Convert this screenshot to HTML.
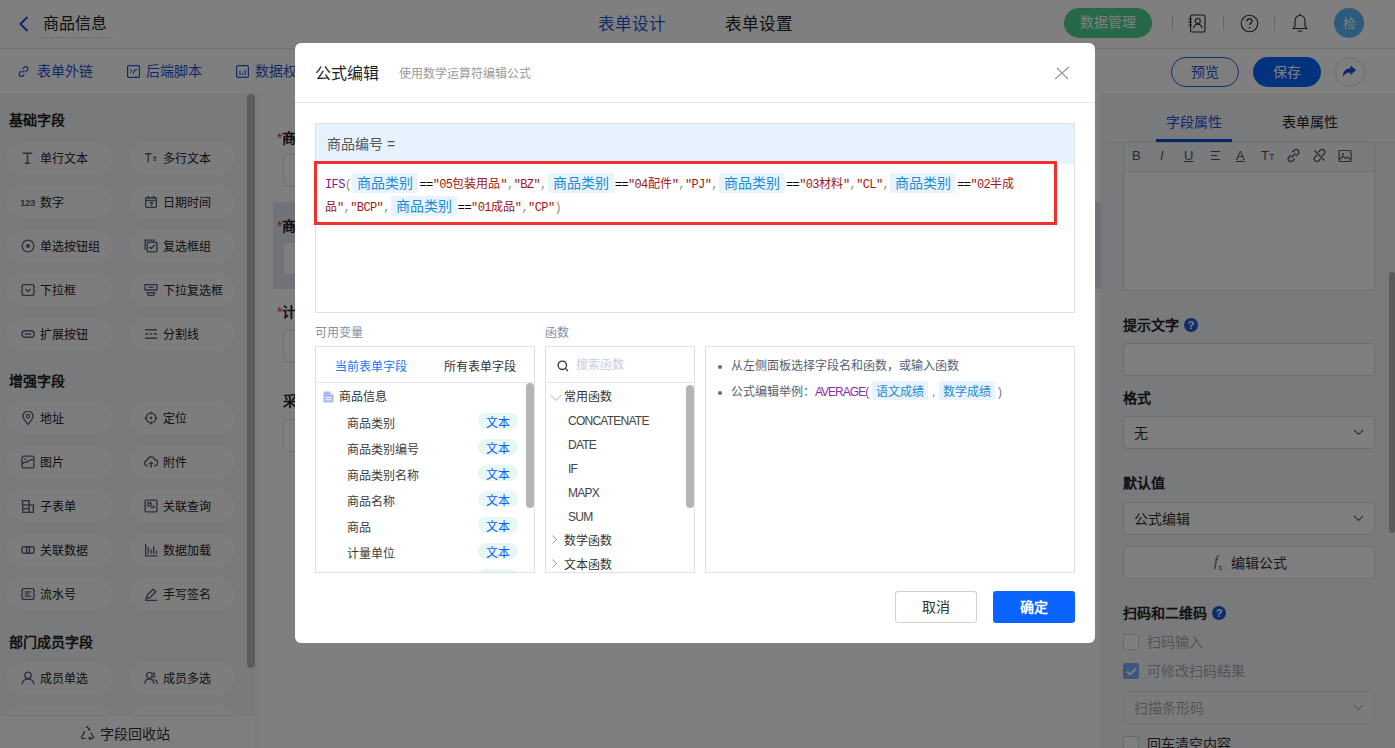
<!DOCTYPE html>
<html lang="zh-CN"><head><meta charset="utf-8">
<style>
*{box-sizing:border-box;margin:0;padding:0}
html,body{width:1395px;height:748px;overflow:hidden;font-family:"Liberation Sans",sans-serif;color:#333;background:#fff}
.a{position:absolute}
.t{position:absolute;white-space:nowrap;line-height:1}
#hdr{left:0;top:0;width:1395px;height:49px;background:#fff;border-bottom:1px solid #e6e6e6}
#tb{left:0;top:49px;width:1395px;height:44px;background:#fff}
#lp{left:0;top:93px;width:262px;height:655px;background:#f3f4f7;overflow:hidden}
#cv{left:262px;top:93px;width:839px;height:655px;background:#fff}
#rp{left:1101px;top:93px;width:294px;height:655px;background:#f3f4f7;overflow:hidden}
.pill{position:absolute;height:34px;border-radius:17px;background:#fbfbfc;width:105px}
.pill span{position:absolute;left:33px;top:11px;font-size:12px;line-height:14px;color:#222}
.pill svg{position:absolute;left:14px;top:10px}
.sec{position:absolute;left:9px;font-size:14px;font-weight:bold;color:#1f1f1f;line-height:14px;white-space:nowrap}
#mask{left:0;top:0;width:1395px;height:748px;background:rgba(0,0,0,.5)}
#modal{left:295px;top:43px;width:800px;height:600px;background:#fff;border-radius:6px;overflow:hidden}
.lab{position:absolute;font-size:14px;font-weight:bold;color:#222;line-height:14px;white-space:nowrap}
.lab i{color:#e0282e;font-style:normal;font-weight:normal}
.inp{position:absolute;height:33px;border:1px solid #dcdfe6;border-radius:4px;background:#fff}
.rl{position:absolute;left:22px;font-size:14px;font-weight:bold;color:#222;line-height:14px;white-space:nowrap}
.rin{position:absolute;left:22px;width:252px;height:33px;border:1px solid #dcdfe6;border-radius:4px;background:#fff}
.rin span{position:absolute;left:10px;top:9px;font-size:14px;line-height:14px;color:#333}
.chev{position:absolute;right:10px;top:12px}
.qm{display:inline-block;width:14px;height:14px;border-radius:7px;background:#1e5bd8;color:#fff;font-size:11px;line-height:14px;text-align:center;font-weight:bold;vertical-align:top;margin-left:5px}
.cb{position:absolute;left:22px;width:16px;height:16px;border:1px solid #d0d0d0;border-radius:2px;background:#fff}
.cbt{position:absolute;left:46px;font-size:14px;line-height:14px;color:#aaa;white-space:nowrap}
</style><style>
#code .kw{color:#7d1b93}
#code .pu{color:#8f8f70}
#code .st{color:#a31515}
#code b{font-family:"Liberation Sans",sans-serif;font-weight:normal;font-size:12px;letter-spacing:0}
#code .tg{display:inline-block;font-family:"Liberation Sans",sans-serif;font-size:14px;line-height:20px;height:20px;padding:0 5px;background:#e8f3fd;color:#1a8bd6;margin:0 1px 0 1px;border-radius:2px;vertical-align:top;margin-top:0;letter-spacing:0}
.vi{position:absolute;left:0;width:218px;height:20px}
.vi span{position:absolute;left:31px;top:4px;font-size:12px;line-height:14px;color:#3c3c3c;white-space:nowrap}
.vi i{position:absolute;left:162px;top:0;width:40px;height:16px;border-radius:8px;background:#e7f7f6;color:#0f5ef7;font-style:normal;font-size:12px;line-height:21px;text-align:center}
.fn{left:22px;font-size:12px;color:#444;letter-spacing:-0.75px}
.tg2{background:#e8f3fd;color:#1a8bd6;height:19px;line-height:22px;border-radius:2px;font-size:12px;text-align:center;white-space:nowrap}
</style>
</head><body>

<!-- header -->
<div id="hdr" class="a">
  <svg class="a" style="left:18px;top:16px" width="11" height="16" viewBox="0 0 11 16"><path d="M9.5 1L2.5 8L9.5 15" fill="none" stroke="#1c4fd0" stroke-width="2"/></svg>
  <div class="t" style="left:43px;top:16px;font-size:16px;color:#222">商品信息</div>
  <div class="a" style="left:41px;top:37px;width:72px;border-top:1px dashed #c8c8c8"></div>
  <div class="t" style="left:598px;top:16px;font-size:16.5px;color:#1f55d6">表单设计</div>
  <div class="t" style="left:725px;top:16px;font-size:16.5px;color:#222">表单设置</div>
  <div class="a" style="left:1064px;top:8px;width:88px;height:30px;border-radius:15px;background:#4dd190"></div>
  <div class="t" style="left:1080px;top:15px;font-size:14px;color:#fff">数据管理</div>
  <div class="a" style="left:1172px;top:16px;width:1px;height:14px;background:#ccc"></div>
  <div class="a" style="left:1223px;top:16px;width:1px;height:14px;background:#ccc"></div>
  <div class="a" style="left:1274px;top:16px;width:1px;height:14px;background:#ccc"></div>
  <svg class="a" style="left:1188px;top:14px" width="19" height="19" viewBox="0 0 19 19"><rect x="2.5" y="1" width="14.5" height="17" rx="1.5" fill="none" stroke="#2a2a2a" stroke-width="1.1"/><circle cx="9.8" cy="7" r="2.5" fill="none" stroke="#2a2a2a" stroke-width="1.1"/><path d="M5.5 14.5c.5-3 2.3-4.2 4.3-4.2s3.8 1.2 4.3 4.2M0.5 5h3.5M0.5 8h3.5M0.5 11h3.5" fill="none" stroke="#2a2a2a" stroke-width="1.1"/></svg>
  <svg class="a" style="left:1240px;top:14px" width="19" height="19" viewBox="0 0 19 19"><circle cx="9.5" cy="9.5" r="8.3" fill="none" stroke="#2a2a2a" stroke-width="1.1"/><path d="M7 7.3a2.5 2.5 0 115 .2c0 1.6-2.5 1.8-2.5 3.6" fill="none" stroke="#2a2a2a" stroke-width="1.2"/><circle cx="9.5" cy="13.6" r="0.9" fill="#2a2a2a"/></svg>
  <svg class="a" style="left:1291px;top:13px" width="18" height="20" viewBox="0 0 18 20"><path d="M9 2.5c-3.2 0-5 2.5-5 5.5v5L2 15.5h14L14 13V8c0-3-1.8-5.5-5-5.5z" fill="none" stroke="#2a2a2a" stroke-width="1.1" stroke-linejoin="round"/><path d="M9 1v1.5M7 18h4" stroke="#2a2a2a" stroke-width="1.2" stroke-linecap="round"/></svg>
  <div class="a" style="left:1334px;top:8px;width:30px;height:30px;border-radius:15px;background:#58b7fb"></div>
  <div class="t" style="left:1343px;top:17px;font-size:13px;color:#fff">检</div>
</div>
<!-- toolbar -->
<div id="tb" class="a">
  <svg class="a" style="left:17px;top:16px" width="13" height="13" viewBox="0 0 13 13"><path d="M5.5 7.5l2-2M4.3 6L2.5 7.8a2.3 2.3 0 003.2 3.2l1.8-1.8M8.7 7l1.8-1.8A2.3 2.3 0 007.3 2L5.5 3.8" fill="none" stroke="#2457d6" stroke-width="1.2"/></svg>
  <div class="t" style="left:37px;top:15px;font-size:14px;color:#1f55d6">表单外链</div>
  <svg class="a" style="left:127px;top:16px" width="13" height="13" viewBox="0 0 13 13"><rect x="0.6" y="0.6" width="11.8" height="11.8" rx="1" fill="none" stroke="#2457d6" stroke-width="1.2"/><path d="M3 8l2-2-2-2M6 9l2-5M10 4l-2 2" fill="none" stroke="#2457d6" stroke-width="1"/></svg>
  <div class="t" style="left:146px;top:15px;font-size:14px;color:#1f55d6">后端脚本</div>
  <svg class="a" style="left:236px;top:16px" width="13" height="13" viewBox="0 0 13 13"><rect x="0.6" y="0.6" width="11.8" height="11.8" rx="1.5" fill="none" stroke="#2457d6" stroke-width="1.2"/><path d="M4 6v4M6.5 8v2M9 5v5" fill="none" stroke="#2457d6" stroke-width="1.2"/></svg>
  <div class="t" style="left:255px;top:15px;font-size:14px;color:#1f55d6">数据权限</div>
  <div class="a" style="left:1171px;top:8px;width:68px;height:30px;border-radius:15px;border:1px solid #1c5ef0"></div>
  <div class="t" style="left:1191px;top:16px;font-size:14px;color:#1f55d6">预览</div>
  <div class="a" style="left:1253px;top:8px;width:68px;height:30px;border-radius:15px;background:#0a64ff"></div>
  <div class="t" style="left:1273px;top:16px;font-size:14px;color:#fff">保存</div>
  <div class="a" style="left:1335px;top:8px;width:30px;height:30px;border-radius:15px;border:1px solid #d8dbe3;background:#fff"></div>
  <svg class="a" style="left:1342px;top:16px" width="15" height="13" viewBox="0 0 15 13"><path d="M14 5L8.5 0.5v2.8C4 3.5 1 6 0.8 12c1.5-3.2 4-4.5 7.7-4.5v2.8z" fill="#1c4fd0"/></svg>
</div>
<!-- left panel -->
<div id="lp" class="a">
  <div class="sec" style="top:20px">基础字段</div>
  <div class="sec" style="top:281px">增强字段</div>
  <div class="sec" style="top:542px">部门成员字段</div>

<div class="pill" style="left:7px;top:48px"><svg width="14" height="15" viewBox="0 0 13 14"><path d="M1.5 2h9M6 2v9.5M3.5 11.5h5" stroke="#56627a" stroke-width="1.4" fill="none"/></svg><span>单行文本</span></div>
<div class="pill" style="left:130px;top:48px"><svg width="14" height="15" viewBox="0 0 13 14"><path d="M1 2.5h6M4 2.5v8M8.5 6h3M8.5 8.5h3" stroke="#56627a" stroke-width="1.3" fill="none"/></svg><span>多行文本</span></div>
<div class="pill" style="left:7px;top:92px"><svg width="14" height="15" viewBox="0 0 13 14"><text x="-1" y="10" font-size="9" font-weight="bold" fill="#56627a" font-family="Liberation Sans" letter-spacing="-0.3">123</text></svg><span>数字</span></div>
<div class="pill" style="left:130px;top:92px"><svg width="14" height="15" viewBox="0 0 13 14"><rect x="1.5" y="2.5" width="10" height="9" rx="1" stroke="#56627a" stroke-width="1.3" fill="none"/><path d="M1.5 5h10M4 1v2.5M9 1v2.5M5 7h3l-1.5 3" stroke="#56627a" stroke-width="1.2" fill="none"/></svg><span>日期时间</span></div>
<div class="pill" style="left:7px;top:136px"><svg width="14" height="15" viewBox="0 0 13 14"><circle cx="6.5" cy="6.5" r="5.5" stroke="#56627a" stroke-width="1.3" fill="none"/><circle cx="6.5" cy="6.5" r="1.8" fill="#56627a"/></svg><span>单选按钮组</span></div>
<div class="pill" style="left:130px;top:136px"><svg width="14" height="15" viewBox="0 0 13 14"><path d="M1 10V1h9" stroke="#56627a" stroke-width="1.3" fill="none"/><rect x="3" y="3" width="9" height="9" rx="1" stroke="#56627a" stroke-width="1.3" fill="none"/><path d="M5 7.3l1.6 1.6L10 5.6" stroke="#56627a" stroke-width="1.3" fill="none"/></svg><span>复选框组</span></div>
<div class="pill" style="left:7px;top:180px"><svg width="14" height="15" viewBox="0 0 13 14"><rect x="1" y="1.5" width="11" height="10" rx="1" stroke="#56627a" stroke-width="1.3" fill="none"/><path d="M4 5.5l2.5 2.5L9 5.5" stroke="#56627a" stroke-width="1.3" fill="none"/></svg><span>下拉框</span></div>
<div class="pill" style="left:130px;top:180px"><svg width="14" height="15" viewBox="0 0 13 14"><path d="M1 1.5h11v5H1z M3 9h7l-1 2.5H4z" stroke="#56627a" stroke-width="1.3" fill="none"/><path d="M4 4h5" stroke="#56627a" stroke-width="1.3"/></svg><span>下拉复选框</span></div>
<div class="pill" style="left:7px;top:224px"><svg width="14" height="15" viewBox="0 0 13 14"><rect x="0.8" y="3.5" width="11.5" height="6" rx="3" stroke="#56627a" stroke-width="1.3" fill="none"/><path d="M3.5 6.5h6" stroke="#56627a" stroke-width="1.3"/></svg><span>扩展按钮</span></div>
<div class="pill" style="left:130px;top:224px"><svg width="14" height="15" viewBox="0 0 13 14"><path d="M1 2.5h11M1 6.5h3M5.5 6.5h2M9 6.5h3M1 10.5h11" stroke="#56627a" stroke-width="1.3" fill="none"/></svg><span>分割线</span></div>
<div class="pill" style="left:7px;top:308px"><svg width="14" height="15" viewBox="0 0 13 14"><path d="M6.5 12.5C3 8.5 1.8 6.5 1.8 4.8a4.7 4.7 0 019.4 0c0 1.7-1.2 3.7-4.7 7.7z" stroke="#56627a" stroke-width="1.3" fill="none"/><circle cx="6.5" cy="4.8" r="1.6" stroke="#56627a" stroke-width="1.2" fill="none"/></svg><span>地址</span></div>
<div class="pill" style="left:130px;top:308px"><svg width="14" height="15" viewBox="0 0 13 14"><circle cx="6.5" cy="6.5" r="4.5" stroke="#56627a" stroke-width="1.3" fill="none"/><circle cx="6.5" cy="6.5" r="1.3" fill="#56627a"/><path d="M6.5 0.5v2.5M6.5 10v2.5M0.5 6.5h2.5M10 6.5h2.5" stroke="#56627a" stroke-width="1.3"/></svg><span>定位</span></div>
<div class="pill" style="left:7px;top:352px"><svg width="14" height="15" viewBox="0 0 13 14"><rect x="1" y="1" width="11" height="11" rx="1.5" stroke="#56627a" stroke-width="1.3" fill="none"/><path d="M1 8.5c2-3 4-1 5.5-2.5S9.5 4 12 4.5" stroke="#56627a" stroke-width="1.3" fill="none"/><circle cx="4" cy="4" r="0.9" fill="#56627a"/></svg><span>图片</span></div>
<div class="pill" style="left:130px;top:352px"><svg width="14" height="15" viewBox="0 0 13 14"><path d="M3.5 10H3a2.5 2.5 0 010-5 3.5 3.5 0 016.8-.8A2.5 2.5 0 0110 10h-.5" stroke="#56627a" stroke-width="1.3" fill="none"/><path d="M6.5 12V7M4.8 8.5l1.7-1.7 1.7 1.7" stroke="#56627a" stroke-width="1.3" fill="none"/></svg><span>附件</span></div>
<div class="pill" style="left:7px;top:396px"><svg width="14" height="15" viewBox="0 0 13 14"><path d="M1.5 1.5h6v11h-6zM7.5 5.5h4v7h-4M1.5 5.5h6M1.5 9h6" stroke="#56627a" stroke-width="1.3" fill="none"/></svg><span>子表单</span></div>
<div class="pill" style="left:130px;top:396px"><svg width="14" height="15" viewBox="0 0 13 14"><rect x="1" y="1" width="11" height="11" rx="1" stroke="#56627a" stroke-width="1.3" fill="none"/><path d="M3.5 3.5h3v3h-3zM6 8h3M8 6l2 2" stroke="#56627a" stroke-width="1.2" fill="none"/></svg><span>关联查询</span></div>
<div class="pill" style="left:7px;top:440px"><svg width="14" height="15" viewBox="0 0 13 14"><rect x="0.8" y="3.5" width="7" height="6" rx="1.5" stroke="#56627a" stroke-width="1.3" fill="none"/><rect x="5.2" y="3.5" width="7" height="6" rx="1.5" stroke="#56627a" stroke-width="1.3" fill="none"/></svg><span>关联数据</span></div>
<div class="pill" style="left:130px;top:440px"><svg width="14" height="15" viewBox="0 0 13 14"><path d="M1.5 1v11h11M4 4v6M6.5 6v4M9 3v7M11.5 7v3" stroke="#56627a" stroke-width="1.3" fill="none"/></svg><span>数据加载</span></div>
<div class="pill" style="left:7px;top:484px"><svg width="14" height="15" viewBox="0 0 13 14"><rect x="1" y="1.5" width="11" height="10" rx="1" stroke="#56627a" stroke-width="1.3" fill="none"/><path d="M3.5 4.5h6M3.5 6.5h4M3.5 8.5h6" stroke="#56627a" stroke-width="1.2"/></svg><span>流水号</span></div>
<div class="pill" style="left:130px;top:484px"><svg width="14" height="15" viewBox="0 0 13 14"><path d="M2 11l1-3.5L8.5 2l2.5 2.5L5.5 10z M1 12.5h11" stroke="#56627a" stroke-width="1.3" fill="none"/></svg><span>手写签名</span></div>
<div class="pill" style="left:7px;top:568px"><svg width="14" height="15" viewBox="0 0 13 14"><circle cx="6.5" cy="4" r="3" stroke="#56627a" stroke-width="1.3" fill="none"/><path d="M1 12.5c0-3 2.5-5 5.5-5s5.5 2 5.5 5" stroke="#56627a" stroke-width="1.3" fill="none"/></svg><span>成员单选</span></div>
<div class="pill" style="left:130px;top:568px"><svg width="14" height="15" viewBox="0 0 13 14"><circle cx="5" cy="4" r="2.7" stroke="#56627a" stroke-width="1.3" fill="none"/><path d="M0.8 12c0-2.8 1.8-4.6 4.2-4.6s4.2 1.8 4.2 4.6M8.3 1.5a2.7 2.7 0 010 5M10 8c1.5.6 2.5 2 2.5 4" stroke="#56627a" stroke-width="1.3" fill="none"/></svg><span>成员多选</span></div>
<div class="pill" style="left:7px;top:612px"><svg width="14" height="15" viewBox="0 0 13 14"><circle cx="6.5" cy="4" r="3" stroke="#56627a" stroke-width="1.3" fill="none"/><path d="M1 12.5c0-3 2.5-5 5.5-5s5.5 2 5.5 5" stroke="#56627a" stroke-width="1.3" fill="none"/></svg><span>部门单选</span></div>
<div class="pill" style="left:130px;top:612px"><svg width="14" height="15" viewBox="0 0 13 14"><circle cx="5" cy="4" r="2.7" stroke="#56627a" stroke-width="1.3" fill="none"/><path d="M0.8 12c0-2.8 1.8-4.6 4.2-4.6s4.2 1.8 4.2 4.6M8.3 1.5a2.7 2.7 0 010 5M10 8c1.5.6 2.5 2 2.5 4" stroke="#56627a" stroke-width="1.3" fill="none"/></svg><span>部门多选</span></div>
  <div class="a" style="left:247px;top:1px;width:8px;height:574px;border-radius:4px;background:#b9b9b9"></div>
  <div class="a" style="left:255px;top:0;width:7px;height:655px;background:#f7f8fa"></div>
  <div class="a" style="left:0;top:622px;width:255px;height:33px;background:#fcfcfd;border-top:1px solid #eee"></div>
  <svg class="a" style="left:80px;top:633px" width="15" height="14" viewBox="0 0 15 14"><path d="M6 1.5L7.5 0.8 9.5 4.2M10.8 6.5l2.8 4.7-.8 1.3H9M5.5 12.5H2.2l-.7-1.3L4 6.8M8.2 3.3l1.3.9.4-1.5M3 6.5l1.1.4.4-1.5M10.5 11l-1.5 1.5 1.5 1" fill="none" stroke="#444" stroke-width="1.1"/></svg>
  <div class="t" style="left:100px;top:634px;font-size:14px;color:#333">字段回收站</div>
</div>
<!-- canvas -->
<div id="cv" class="a">
  <div class="a" style="left:11px;top:109px;width:830px;height:87px;background:#e2e7f2"></div>
  <div class="lab" style="left:15px;top:38px"><i>*</i>商品编号</div>
  <div class="inp" style="left:21px;top:61px;width:800px"></div>
  <div class="lab" style="left:15px;top:126px"><i>*</i>商品名称</div>
  <div class="inp" style="left:21px;top:149px;width:800px"></div>
  <div class="lab" style="left:15px;top:212px"><i>*</i>计量单位</div>
  <div class="inp" style="left:21px;top:237px;width:800px"></div>
  <div class="lab" style="left:21px;top:301px">采购单价</div>
  <div class="inp" style="left:21px;top:326px;width:800px"></div>
</div>

<!-- right panel -->
<div id="rp" class="a">
  <div class="a" style="left:0;top:0;width:1px;height:655px;background:#ececec"></div>
  <div class="t" style="left:65px;top:22px;font-size:14px;color:#1f55d6">字段属性</div>
  <div class="t" style="left:181px;top:22px;font-size:14px;color:#222">表单属性</div>
  <div class="a" style="left:8px;top:49px;width:286px;height:1px;background:#e3e3e3"></div>
  <div class="a" style="left:55px;top:46px;width:76px;height:3px;background:#0a50d8"></div>
  <div class="a" style="left:22px;top:50px;width:252px;height:148px;border:1px solid #dcdcdc;border-top:none;background:#fff"></div>
  <div class="a" style="left:23px;top:50px;width:250px;height:29px;background:#f5f6f8;border-bottom:1px solid #dedede"></div>
  <div class="t" style="left:31px;top:56px;font-size:13px;color:#555;font-weight:normal">B</div>
  <div class="t" style="left:59px;top:56px;font-size:13px;color:#555;font-style:italic">I</div>
  <div class="t" style="left:83px;top:56px;font-size:13px;color:#555;text-decoration:underline">U</div>
  <svg class="a" style="left:109px;top:57px" width="11" height="11" viewBox="0 0 11 11"><path d="M1 1.5h9M1 5.5h6M1 9.5h9" stroke="#555" stroke-width="1.2"/></svg>
  <div class="t" style="left:135px;top:56px;font-size:13px;color:#555;text-decoration:underline">A</div>
  <div class="t" style="left:160px;top:56px;font-size:13px;color:#555">T<span style="font-size:9px">T</span></div>
  <svg class="a" style="left:185px;top:55px" width="15" height="15" viewBox="0 0 15 15"><path d="M5.5 9.5l4-4M5 7L3 9a2.6 2.6 0 003.7 3.7l2-2M10 8l2-2A2.6 2.6 0 008.3 2.3l-2 2" fill="none" stroke="#555" stroke-width="1.3"/></svg>
  <svg class="a" style="left:211px;top:55px" width="15" height="15" viewBox="0 0 15 15"><path d="M5 7L3 9a2.6 2.6 0 003.7 3.7l2-2M10 8l2-2A2.6 2.6 0 008.3 2.3l-2 2M2.5 2.5l10 10" fill="none" stroke="#555" stroke-width="1.3"/></svg>
  <svg class="a" style="left:237px;top:56px" width="14" height="14" viewBox="0 0 14 14"><rect x="1" y="1.5" width="12" height="11" rx="1" fill="none" stroke="#555" stroke-width="1.2"/><path d="M1.5 10.5l3.5-3.5 2.5 2.5 2-1.5 3 2.5" fill="none" stroke="#555" stroke-width="1.1"/><circle cx="5" cy="5" r="1" fill="#555"/></svg>
  <div class="rl" style="top:225px">提示文字<span class="qm">?</span></div>
  <div class="rin" style="top:250px"></div>
  <div class="rl" style="top:298px">格式</div>
  <div class="rin" style="top:323px"><span>无</span><svg class="chev" width="11" height="7" viewBox="0 0 11 7"><path d="M1 1l4.5 4.5L10 1" fill="none" stroke="#666" stroke-width="1.2"/></svg></div>
  <div class="rl" style="top:383px">默认值</div>
  <div class="rin" style="top:409px"><span>公式编辑</span><svg class="chev" width="11" height="7" viewBox="0 0 11 7"><path d="M1 1l4.5 4.5L10 1" fill="none" stroke="#666" stroke-width="1.2"/></svg></div>
  <div class="rin" style="top:453px"><span style="left:90px;font-family:'Liberation Serif',serif;font-style:italic;color:#555;top:8px">f<sub style="font-size:9px;font-style:normal">x</sub></span><span style="left:107px">编辑公式</span></div>
  <div class="rl" style="top:513px">扫码和二维码<span class="qm">?</span></div>
  <div class="cb" style="top:541px"></div>
  <div class="cbt" style="top:542px">扫码输入</div>
  <div class="cb" style="top:570px;background:#7eacf8;border-color:#7eacf8"><svg class="a" style="left:2px;top:3px" width="11" height="9" viewBox="0 0 11 9"><path d="M1 4.5l3 3L10 1.5" fill="none" stroke="#fff" stroke-width="1.8"/></svg></div>
  <div class="cbt" style="top:571px">可修改扫码结果</div>
  <div class="rin" style="top:598px;background:#f7f7f8;border-color:#e4e4e4"><span style="color:#aaa">扫描条形码</span><svg class="chev" width="11" height="7" viewBox="0 0 11 7"><path d="M1 1l4.5 4.5L10 1" fill="none" stroke="#bbb" stroke-width="1.2"/></svg></div>
  <div class="cb" style="top:643px"></div>
  <div class="cbt" style="top:644px;color:#333">回车清空内容</div>
  <div class="a" style="left:288px;top:179px;width:6px;height:261px;border-radius:3px;background:#b5b5b5"></div>
</div>
<div id="mask" class="a"></div>

<div id="modal" class="a">
  <div class="t" style="left:20px;top:23px;font-size:16px;color:#1f1f1f">公式编辑</div>
  <div class="t" style="left:104px;top:25px;font-size:12px;color:#999">使用数学运算符编辑公式</div>
  <svg class="a" style="left:759px;top:22px" width="16" height="16" viewBox="0 0 16 16"><path d="M1 14L15 2M3 3l11 11" stroke="#999" stroke-width="1.2" fill="none"/></svg>
  <div class="a" style="left:0;top:59px;width:800px;height:1px;background:#e8e8e8"></div>
  <!-- formula box -->
  <div class="a" style="left:20px;top:80px;width:760px;height:190px;border:1px solid #e1e1e1"></div>
  <div class="a" style="left:21px;top:81px;width:758px;height:40px;background:#e6f3fe"></div>
  <div class="t" style="left:32px;top:94px;font-size:14px;color:#555">商品编号 =</div>
  <div id="code" class="a" style="left:30px;top:130px;width:720px;font-family:'Liberation Mono',monospace;font-size:12px;letter-spacing:-0.6px;line-height:22px;color:#000;white-space:nowrap">
    <div><span class="kw">IFS</span><span class="pu">(</span><span class="tg">商品类别</span>==<span class="st">"05<b>包装用品</b>"</span><span class="pu">,</span><span class="st">"BZ"</span><span class="pu">,</span><span class="tg">商品类别</span>==<span class="st">"04<b>配件</b>"</span><span class="pu">,</span><span class="st">"PJ"</span><span class="pu">,</span><span class="tg">商品类别</span>==<span class="st">"03<b>材料</b>"</span><span class="pu">,</span><span class="st">"CL"</span><span class="pu">,</span><span class="tg">商品类别</span>==<span class="st">"02<b>半成</b></span></div>
    <div><span class="st"><b>品</b>"</span><span class="pu">,</span><span class="st">"BCP"</span><span class="pu">,</span><span class="tg">商品类别</span>==<span class="st">"01<b>成品</b>"</span><span class="pu">,</span><span class="st">"CP"</span><span class="pu">)</span></div>
  </div>
  <div class="a" style="left:19px;top:118px;width:743px;height:64px;border:3px solid #f0302d"></div>
  <!-- labels -->
  <div class="t" style="left:20px;top:284px;font-size:12px;color:#7f90a8">可用变量</div>
  <div class="t" style="left:250px;top:284px;font-size:12px;color:#7f90a8">函数</div>
  <!-- var panel -->
  <div class="a" style="left:20px;top:303px;width:220px;height:227px;border:1px solid #e1e1e1;overflow:hidden">
    <div class="a" style="left:0;top:35px;width:218px;height:1px;background:#e6e6e6"></div>
    <div class="t" style="left:19px;top:14px;font-size:12px;color:#1677ff">当前表单字段</div>
    <div class="t" style="left:128px;top:14px;font-size:12px;color:#333">所有表单字段</div>
    <svg class="a" style="left:7px;top:44px" width="11" height="12" viewBox="0 0 11 12"><path d="M0.5 0.5h6.5l3.5 3.5v7.5h-10z" fill="#a8b8f8"/><path d="M2.5 6.5h6M2.5 8.8h6" stroke="#fff" stroke-width="1.1"/><path d="M7 0.5v3.5h3.5" fill="#d6defd"/></svg>
    <div class="t" style="left:23px;top:44px;font-size:12px;color:#333">商品信息</div>
    <div class="vi" style="top:66px"><span>商品类别</span><i>文本</i></div>
    <div class="vi" style="top:92px"><span>商品类别编号</span><i>文本</i></div>
    <div class="vi" style="top:118px"><span>商品类别名称</span><i>文本</i></div>
    <div class="vi" style="top:144px"><span>商品名称</span><i>文本</i></div>
    <div class="vi" style="top:170px"><span>商品</span><i>文本</i></div>
    <div class="vi" style="top:196px"><span>计量单位</span><i>文本</i></div>
    <div class="vi" style="top:222px"><span>采购单价</span><i>文本</i></div>
    <div class="a" style="left:210px;top:36px;width:8px;height:125px;border-radius:4px;background:#b5b5b5"></div>
  </div>
  <!-- func panel -->
  <div class="a" style="left:250px;top:303px;width:150px;height:227px;border:1px solid #e1e1e1;overflow:hidden">
    <div class="a" style="left:0;top:35px;width:148px;height:1px;background:#e6e6e6"></div>
    <svg class="a" style="left:11px;top:13px" width="12" height="12" viewBox="0 0 12 12"><circle cx="5.3" cy="5.3" r="4.2" fill="none" stroke="#333" stroke-width="1.3"/><path d="M8.4 8.4l2.6 2.6" stroke="#333" stroke-width="1.3"/></svg>
    <div class="t" style="left:30px;top:12px;font-size:12px;color:#c6cedb">搜索函数</div>
    <svg class="a" style="left:4px;top:47px" width="12" height="7" viewBox="0 0 12 7"><path d="M0.5 0.8l5.5 5.5 5.5-5.5" fill="none" stroke="#c2c9d6" stroke-width="1.1"/></svg>
    <div class="t" style="left:18px;top:44px;font-size:12px;color:#333">常用函数</div>
    <div class="t fn" style="top:68px">CONCATENATE</div>
    <div class="t fn" style="top:92px">DATE</div>
    <div class="t fn" style="top:116px">IF</div>
    <div class="t fn" style="top:140px">MAPX</div>
    <div class="t fn" style="top:164px">SUM</div>
    <svg class="a" style="left:6px;top:188px" width="5" height="9" viewBox="0 0 5 9"><path d="M0.5 0.5l4 4-4 4" fill="none" stroke="#999" stroke-width="1"/></svg>
    <div class="t" style="left:18px;top:188px;font-size:12px;color:#333">数学函数</div>
    <svg class="a" style="left:6px;top:212px" width="5" height="9" viewBox="0 0 5 9"><path d="M0.5 0.5l4 4-4 4" fill="none" stroke="#999" stroke-width="1"/></svg>
    <div class="t" style="left:18px;top:212px;font-size:12px;color:#333">文本函数</div>
    <div class="a" style="left:140px;top:38px;width:8px;height:123px;border-radius:4px;background:#b5b5b5"></div>
  </div>
  <!-- desc panel -->
  <div class="a" style="left:410px;top:303px;width:370px;height:227px;border:1px solid #e1e1e1">
    <div class="a" style="left:12px;top:18px;width:4px;height:4px;border-radius:2px;background:#5f6b7c"></div>
    <div class="t" style="left:25px;top:13px;font-size:12px;color:#56606e">从左侧面板选择字段名和函数，或输入函数</div>
    <div class="a" style="left:12px;top:44px;width:4px;height:4px;border-radius:2px;background:#5f6b7c"></div>
    <div class="t" style="left:25px;top:39px;font-size:12px;color:#56606e">公式编辑举例：</div>
    <div class="t" style="left:109px;top:39px;font-size:12px;color:#8e2dae;letter-spacing:-1px">AVERAGE(</div>
    <div class="a tg2" style="left:166px;top:34px;width:56px">语文成绩</div>
    <div class="t" style="left:226px;top:39px;font-size:12px;color:#777">,</div>
    <div class="a tg2" style="left:233px;top:34px;width:56px">数学成绩</div>
    <div class="t" style="left:292px;top:39px;font-size:12px;color:#777">)</div>
  </div>
  <!-- buttons -->
  <div class="a" style="left:600px;top:548px;width:82px;height:32px;border:1px solid #d0d0d0;border-radius:3px;background:#fff"></div>
  <div class="t" style="left:627px;top:557px;font-size:14px;color:#333">取消</div>
  <div class="a" style="left:698px;top:548px;width:82px;height:32px;border-radius:3px;background:#0a64ff"></div>
  <div class="t" style="left:725px;top:557px;font-size:14px;color:#fff;font-weight:bold">确定</div>
</div>
</body></html>
